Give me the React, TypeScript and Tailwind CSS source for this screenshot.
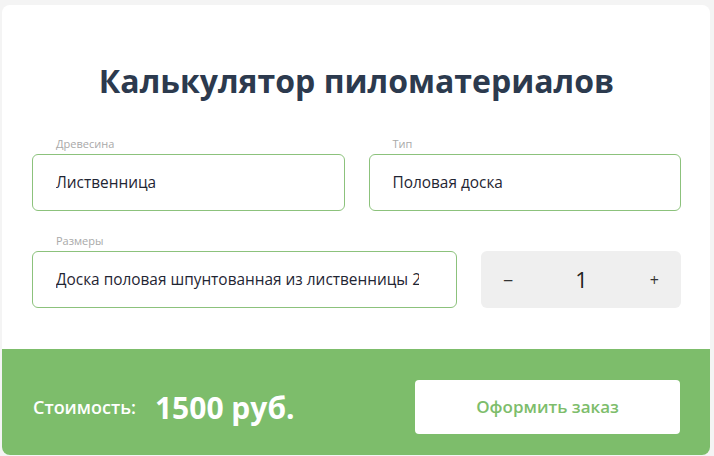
import React, { useState } from 'react';

const font = { fontFamily: '"Open Sans", "Noto Sans", sans-serif' };

interface FieldProps {
  label: string;
  value: string;
  className?: string;
}

const Field: React.FC<FieldProps> = ({ label, value, className }) => (
  <div className={`flex flex-col min-w-0 ${className ?? ''}`}>
    <span className="ml-6 mb-1 text-[11px] leading-[12px] text-[#a9a9a9]">{label}</span>
    <div className="h-[57px] rounded-md border border-[#8cc27c] bg-white flex items-center pl-[23px] pr-[37px] overflow-hidden">
      <span className="block text-[15.4px] font-medium text-[#1f2533] whitespace-nowrap overflow-hidden">{value}</span>
    </div>
  </div>
);

const App: React.FC = () => {
  const [count, setCount] = useState(1);

  return (
    <div className="bg-[#f4f4f4] min-h-screen pt-[5px] pb-px pl-[2px] pr-[4px]" style={font}>
      <div className="bg-white rounded-lg overflow-hidden flex flex-col">
        <div className="pt-[55px] pb-[41px] pl-[30px] pr-[29px]">
          <h1 className="text-center text-[32px] leading-[42px] font-bold text-[#2c3a4e]">
            Калькулятор пиломатериалов
          </h1>

          <div className="grid grid-cols-2 gap-6 mt-[36px]">
            <Field label="Древесина" value="Лиственница" />
            <Field label="Тип" value="Половая доска" />
          </div>

          <div className="flex gap-6 mt-6 items-end">
            <Field
              className="flex-1"
              label="Размеры"
              value="Доска половая шпунтованная из лиственницы 28х90 мм"
            />
            <div className="w-[200px] h-[57px] rounded-md bg-[#efefef] flex items-center justify-between pl-[22px] pr-[22px] text-[#333]">
              <button onClick={() => setCount(c => Math.max(1, c - 1))} className="text-[18px] leading-none">
                −
              </button>
              <span className="text-[22px] text-[#222]">{count}</span>
              <button onClick={() => setCount(c => c + 1)} className="text-[16px] leading-none">
                +
              </button>
            </div>
          </div>
        </div>

        <div className="bg-[#7dbd6b] h-[106px] flex items-start justify-between pt-[31px] pl-[31px] pr-[30px]">
          <div className="flex items-center h-[54px] gap-[19px] text-white">
            <span className="text-[18px] font-semibold">Стоимость:</span>
            <span className="text-[30px] font-bold">1500 руб.</span>
          </div>
          <button className="w-[265px] h-[54px] bg-white rounded text-[17px] font-semibold text-[#7dbd6b]">
            Оформить заказ
          </button>
        </div>
      </div>
    </div>
  );
};

export default App;
